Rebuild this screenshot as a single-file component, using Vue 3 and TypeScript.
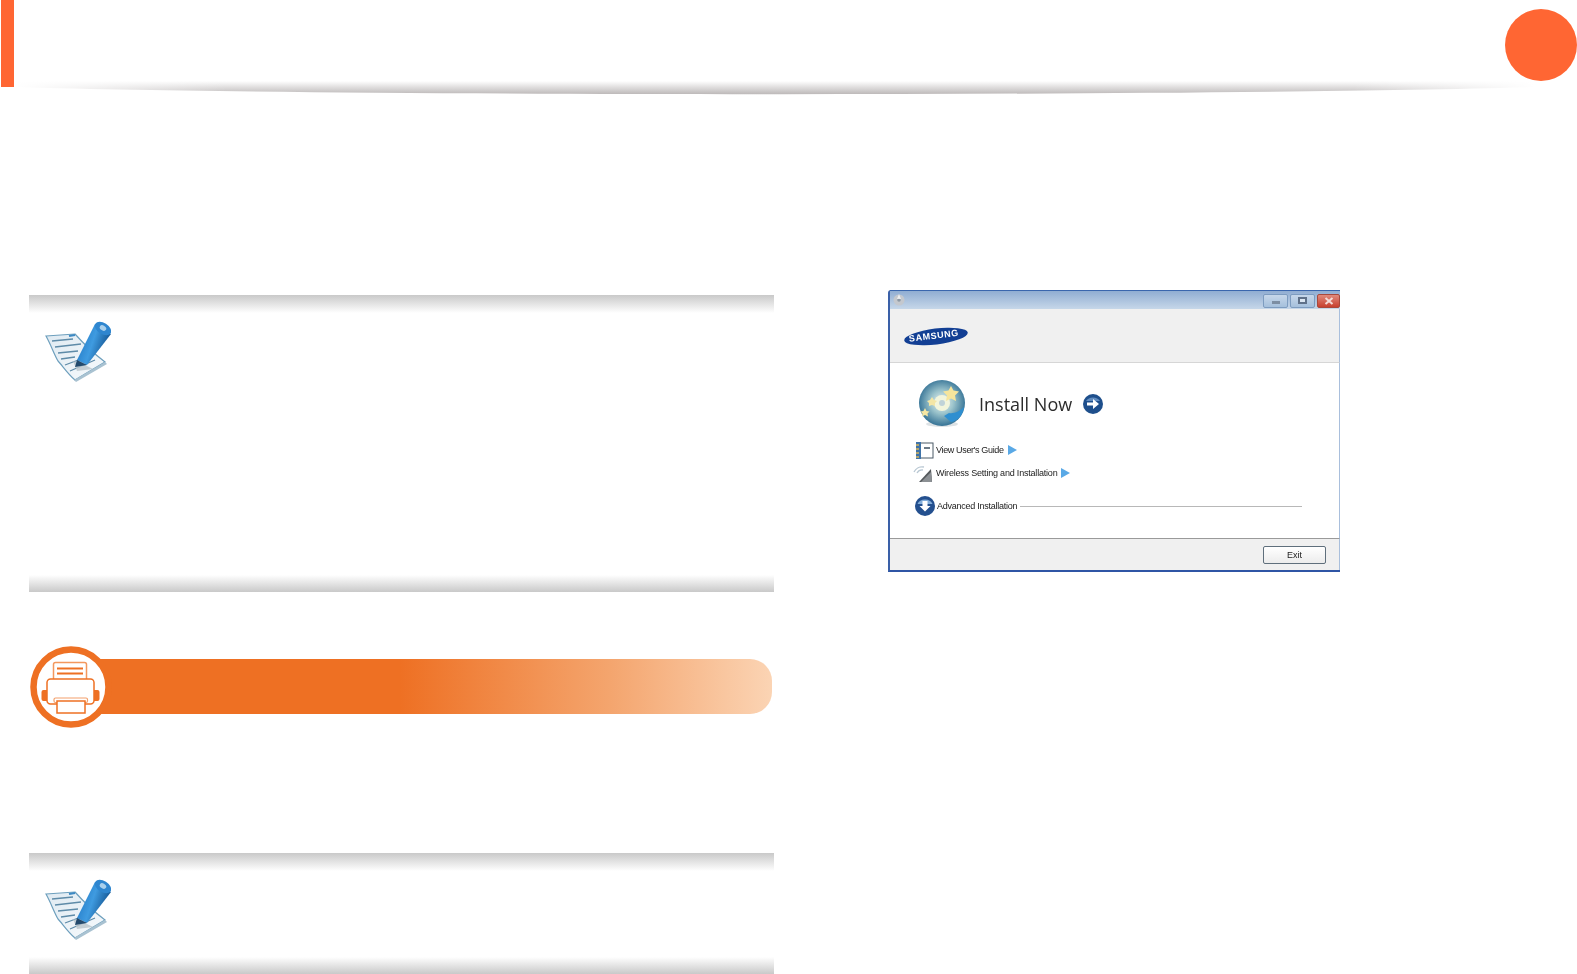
<script setup lang="ts">
const links = [
  { id: "guide", label: "View User's Guide" },
  { id: "wireless", label: "Wireless Setting and Installation" },
];
</script>

<template>
  <div class="page">
    <header class="top">
      <div class="tab"></div>
      <div class="dot"></div>
      <svg class="rule" width="1577" height="16" viewBox="0 0 1577 16">
        <defs>
          <linearGradient id="ruleV" x1="0" y1="0" x2="0" y2="1">
            <stop offset="0" stop-color="#fff" />
            <stop offset="0.5" stop-color="#dedcdc" />
            <stop offset="1" stop-color="#bdb9b9" />
          </linearGradient>
          <linearGradient id="ruleH" x1="0" y1="0" x2="1" y2="0">
            <stop offset="0" stop-color="#fff" stop-opacity="1" />
            <stop offset="0.14" stop-color="#fff" stop-opacity="0" />
            <stop offset="0.88" stop-color="#fff" stop-opacity="0" />
            <stop offset="1" stop-color="#fff" stop-opacity="1" />
          </linearGradient>
        </defs>
        <path d="M14 6 C 300 15 1200 16 1535 6 L 1535 0 L 14 0 Z" fill="url(#ruleV)" />
        <rect x="14" width="1521" height="16" fill="url(#ruleH)" />
      </svg>
    </header>

    <main class="main">
      <section class="left">
        <div class="note note-tall">
          <svg class="note-icon" viewBox="0 0 66 62" width="66" height="62">
            <defs>
              <linearGradient id="paper" x1="0" y1="0" x2="1" y2="1">
                <stop offset="0" stop-color="#dfeaf2" />
                <stop offset="1" stop-color="#f7fafc" />
              </linearGradient>
              <linearGradient id="pencil" x1="0" y1="0" x2="1" y2="0.4">
                <stop offset="0" stop-color="#1a6fbe" />
                <stop offset="0.55" stop-color="#3f9be0" />
                <stop offset="1" stop-color="#12528f" />
              </linearGradient>
            </defs>
            <path d="M1 15 L30 13 C 38 22 48 32 60 41 L30 59 C 22 52 17 44 13 40 C 9 33 6 24 1 15 Z" fill="url(#paper)" stroke="#6d9fbd" stroke-width="1.2" />
            <path d="M29 59 L60 41 L62 43 L31 61 Z" fill="#a9c2d1" />
            <path d="M7 20 L28 18 M10 26 L36 23 M13 32 L33 30 M16 38 L30 36 M20 44 L44 35 M25 50 L50 39" stroke="#5e8ba8" stroke-width="1.3" fill="none" />
            <path d="M24 15 L30 14" stroke="#3c89c4" stroke-width="2" />
            <path d="M28 40 L38 43 L48 48 L32 50 Z" fill="#b9c4cb" opacity="0.8" />
            <path d="M50 3 L66 13 L42 44 L32 39 Z" fill="url(#pencil)" />
            <path d="M32 39 L42 44 L30 46 Z" fill="#234a6d" />
            <ellipse cx="58" cy="7.5" rx="9" ry="5.5" transform="rotate(32 58 7.5)" fill="#2f86cf" />
            <ellipse cx="58" cy="7" rx="3.5" ry="2.5" transform="rotate(32 58 7)" fill="#a9d0ec" />
          </svg>
        </div>

        <div class="heading">
          <div class="pill"></div>
          <svg class="badge" viewBox="0 0 82 82" width="82" height="82">
            <circle cx="41" cy="41" r="37.5" fill="#fff" stroke="#ee7023" stroke-width="6.5" />
            <rect x="23.5" y="16.5" width="33" height="22" rx="2" fill="#fff" stroke="#f3985e" stroke-width="1.5" />
            <path d="M27 22.5 H53 M27 27.5 H53" stroke="#ee7023" stroke-width="2" />
            <path d="M17 44 H13.5 a2 2 0 0 0 -2 2 v7 a2 2 0 0 0 2 2 H17 Z M64 44 H67.5 a2 2 0 0 1 2 2 v7 a2 2 0 0 1 -2 2 H64 Z" fill="#ee7023" />
            <rect x="17" y="33" width="47" height="25" rx="3.5" fill="#fff" stroke="#ee7023" stroke-width="1.5" />
            <rect x="24" y="52" width="33.5" height="4.5" rx="1.5" fill="#fff" stroke="#f3a06c" stroke-width="1.2" />
            <rect x="27" y="55" width="28" height="12" fill="#fff" stroke="#ee7023" stroke-width="1.5" />
          </svg>
        </div>

        <div class="note note-short">
          <svg class="note-icon" viewBox="0 0 66 62" width="66" height="62">
            <path d="M1 15 L30 13 C 38 22 48 32 60 41 L30 59 C 22 52 17 44 13 40 C 9 33 6 24 1 15 Z" fill="url(#paper)" stroke="#6d9fbd" stroke-width="1.2" />
            <path d="M29 59 L60 41 L62 43 L31 61 Z" fill="#a9c2d1" />
            <path d="M7 20 L28 18 M10 26 L36 23 M13 32 L33 30 M16 38 L30 36 M20 44 L44 35 M25 50 L50 39" stroke="#5e8ba8" stroke-width="1.3" fill="none" />
            <path d="M24 15 L30 14" stroke="#3c89c4" stroke-width="2" />
            <path d="M28 40 L38 43 L48 48 L32 50 Z" fill="#b9c4cb" opacity="0.8" />
            <path d="M50 3 L66 13 L42 44 L32 39 Z" fill="url(#pencil)" />
            <path d="M32 39 L42 44 L30 46 Z" fill="#234a6d" />
            <ellipse cx="58" cy="7.5" rx="9" ry="5.5" transform="rotate(32 58 7.5)" fill="#2f86cf" />
            <ellipse cx="58" cy="7" rx="3.5" ry="2.5" transform="rotate(32 58 7)" fill="#a9d0ec" />
          </svg>
        </div>
      </section>

      <section class="right">
        <div class="window">
          <div class="titlebar">
            <svg class="app-icon" viewBox="0 0 14 14" width="14" height="14">
              <circle cx="7" cy="7" r="5.5" fill="#c4c8ce" />
              <circle cx="7" cy="7" r="1.8" fill="#8d99a6" />
              <path d="M7 1 L9 6 L5 6 Z" fill="#fff" opacity="0.7" />
            </svg>
            <div class="ctrls">
              <div class="ctrl ctrl-min"><span class="glyph-min"></span></div>
              <div class="ctrl ctrl-max"><span class="glyph-max"></span></div>
              <div class="ctrl ctrl-close">
                <svg viewBox="0 0 12 8" width="12" height="8"><path d="M2.5 1 L9.5 7 M9.5 1 L2.5 7" stroke="#f4dcd8" stroke-width="2" /></svg>
              </div>
            </div>
          </div>

          <div class="win-header">
            <svg class="logo" viewBox="0 0 64 21" width="64" height="21">
              <g transform="rotate(-7 32 10.5)">
                <ellipse cx="32" cy="10.5" rx="32" ry="8" fill="#123f94" />
                <text x="30" y="12.5" text-anchor="middle" class="logo-text">SAMSUNG</text>
              </g>
            </svg>
          </div>

          <div class="win-body">
            <div class="install">
              <svg viewBox="0 0 50 48" width="50" height="48">
                <defs>
                  <radialGradient id="disc" cx="0.5" cy="0.48" r="0.55">
                    <stop offset="0" stop-color="#eef3f2" />
                    <stop offset="0.45" stop-color="#9cc4cc" />
                    <stop offset="1" stop-color="#2a6a90" />
                  </radialGradient>
                </defs>
                <ellipse cx="25" cy="44" rx="16" ry="3" fill="#dde2e5" />
                <circle cx="25" cy="23" r="23" fill="url(#disc)" />
                <circle cx="25" cy="23" r="8" fill="#f2f5dc" />
                <circle cx="25" cy="23" r="3" fill="#c0d3d8" />
                <path d="M34 6 L36.5 10.5 L42 11.5 L38 15.5 L39 21 L34 18.5 L29 21 L30 15.5 L26 11.5 L31.5 10.5 Z" fill="#f6e59c" />
                <path d="M15 17 l2 3 l3 1 l-2 2 l0 3 l-3 -1 l-3 1 l0 -3 l-2 -2 l3 -1 Z" fill="#f3e6a6" />
                <path d="M8 28 l1.5 3 l3 .5 l-2 2 l.5 3 l-3 -1.5 l-3 1.5 l.5 -3 l-2 -2 l3 -.5 Z" fill="#f6e7a2" />
                <path d="M47 27 C 46 35 41 41 34 42 L27 36 L32 33 C 37 34 43 31 47 27 Z" fill="#2f8fd0" />
              </svg>
              <span class="install-text">Install Now</span>
              <svg viewBox="0 0 20 20" width="20" height="20">
                <circle cx="10" cy="10" r="10" fill="#1e4f8c" />
                <path d="M3 7 A 8 7 0 0 1 17 7 Z" fill="#7ea7d4" opacity="0.7" />
                <path d="M4 8.5 H10 V5 L16 10 L10 15 V11.5 H4 Z" fill="#fff" />
              </svg>
            </div>

            <div class="link-row link-guide">
              <svg class="link-icon" viewBox="0 0 22 18" width="22" height="18">
                <rect x="5" y="2" width="16" height="15" fill="#fff" stroke="#4b5a67" stroke-width="1" />
                <rect x="4" y="1" width="5" height="17" fill="#3f73a8" />
                <path d="M4 4 H7 M4 8 H7 M4 12 H7 M4 16 H7" stroke="#d9b75c" stroke-width="1.5" />
                <rect x="12" y="6" width="6" height="2" fill="#6c7a86" />
              </svg>
              <span class="link-text">{{ links[0].label }}</span>
              <span class="play"></span>
            </div>
            <div class="link-row link-wireless">
              <svg class="link-icon" viewBox="0 0 22 18" width="22" height="18">
                <path d="M2 8 A 9 9 0 0 1 12 3 M5 9 A 6 6 0 0 1 11 6" stroke="#b9c8d3" stroke-width="1.3" fill="none" />
                <path d="M7 18 L20 18 L19 5 Z" fill="#55595c" />
                <path d="M9 18 L19 8 L20 18 Z" fill="#8c9094" />
              </svg>
              <span class="link-text">{{ links[1].label }}</span>
              <span class="play"></span>
            </div>
            <div class="adv-row">
              <svg class="adv-icon" viewBox="0 0 20 20" width="20" height="20">
                <circle cx="10" cy="10" r="10" fill="#24508f" />
                <path d="M2.5 8 A 8 7 0 0 1 17.5 8 Z" fill="#84aeda" />
                <path d="M7.5 5 H12.5 V10 H15.5 L10 15.5 L4.5 10 H7.5 Z" fill="#fff" />
              </svg>
              <span class="adv-text">Advanced Installation</span>
              <div class="adv-line"></div>
            </div>
          </div>

          <div class="win-footer">
            <div class="exit-btn">Exit</div>
          </div>
        </div>
      </section>
    </main>
  </div>
</template>

<style>
html,
body {
  margin: 0;
  background: #fff;
  overflow: hidden;
}
</style>

<style scoped>
.page {
  width: 1577px;
  height: 974px;
  overflow: hidden;
  background: #fff;
  font-family: "Liberation Sans", Arial, sans-serif;
}

.top {
  position: relative;
  height: 87px;
}

.tab {
  width: 13px;
  height: 87px;
  margin-left: 1px;
  background: #ff6633;
}

.dot {
  position: absolute;
  top: 9px;
  left: 1505px;
  width: 72px;
  height: 72px;
  border-radius: 50%;
  background: #ff6633;
}

.rule {
  position: absolute;
  left: 0;
  top: 81px;
}

.main {
  display: grid;
  grid-template-columns: 745px 452px;
  column-gap: 114px;
  padding: 203px 0 0 29px;
}

.left {
  padding-top: 5px;
}

.note {
  position: relative;
  box-sizing: border-box;
  background:
    linear-gradient(#c9c9c9, #fff) top / 100% 18px no-repeat,
    linear-gradient(#fff, #c9c9c9) bottom / 100% 17px no-repeat;
}

.note-tall {
  height: 297px;
}

.note-short {
  height: 121px;
  margin-top: 139px;
}

.note-icon {
  display: block;
  position: absolute;
  left: 16px;
  top: 26px;
  filter: blur(0.6px);
}

.heading {
  position: relative;
  height: 55px;
  margin-top: 67px;
}

.pill {
  height: 55px;
  margin: 0 2px 0 40px;
  border-radius: 0 22px 22px 0;
  background: linear-gradient(90deg, #ee7023 0%, #ee7023 47%, #f4a56e 77%, #fbd4b4 100%);
}

.badge {
  position: absolute;
  left: 1px;
  top: -13.5px;
}

.window {
  box-sizing: border-box;
  width: 452px;
  height: 282px;
  display: flex;
  flex-direction: column;
  background: #fff;
  border-left: 2px solid #3a60a8;
  border-bottom: 2px solid #2f55a5;
  border-radius: 3px 0 0 0;
  filter: blur(0.45px);
}

.titlebar {
  height: 19px;
  box-sizing: border-box;
  display: flex;
  align-items: flex-start;
  justify-content: space-between;
  border-top: 1.5px solid #3a66ad;
  background: linear-gradient(#90add2, #c6d7e9);
  padding-left: 2px;
}

.app-icon {
  margin-top: 2px;
}

.ctrls {
  display: flex;
  gap: 2px;
  margin-top: 2.5px;
}

.ctrl {
  height: 14px;
  display: flex;
  align-items: center;
  justify-content: center;
  box-sizing: border-box;
  border: 1px solid #7d9cc0;
  border-radius: 2px;
  background: linear-gradient(#c6d7ea, #a5c0dc);
}

.ctrl-min {
  width: 25px;
}

.ctrl-max {
  width: 25px;
}

.ctrl-close {
  width: 23px;
  border-color: #a8493c;
  background: linear-gradient(#e08a7c, #c8402f);
}

.glyph-min {
  width: 8px;
  height: 3px;
  margin-top: 4px;
  background: #7c8ea3;
}

.glyph-max {
  box-sizing: border-box;
  width: 9px;
  height: 7px;
  border: 2px solid #5f7189;
  background: #dbe6f1;
}

.win-header {
  height: 54px;
  box-sizing: border-box;
  padding: 17px 0 0 14px;
  background: #f0f0f0;
  border-bottom: 1px solid #d6d6d6;
  border-right: 1px solid #a9bfdc;
}

.logo {
  display: block;
}

.logo-text {
  fill: #fff;
  font-family: "Liberation Sans", Arial, sans-serif;
  font-weight: 700;
  font-size: 9px;
  letter-spacing: 0.6px;
}

.win-body {
  flex: 1;
  padding: 17px 37px 0 22px;
  border-right: 1px solid #a9bfdc;
}

.install {
  display: flex;
  align-items: center;
  padding-left: 5px;
  height: 48px;
}

.install-text {
  margin: 0 11px 0 12px;
  font-family: "Open Sans", sans-serif;
  font-size: 18px;
  color: #2c2c2c;
}

.link-row {
  display: flex;
  align-items: center;
  height: 18px;
}

.link-guide {
  margin-top: 13px;
}

.link-guide .link-text {
  letter-spacing: -0.35px;
}

.link-wireless {
  margin-top: 5px;
}

.link-icon {
  flex: none;
}

.link-text {
  margin-left: 2px;
  font-size: 9px;
  letter-spacing: -0.2px;
  color: #222;
  white-space: nowrap;
}

.play {
  width: 0;
  height: 0;
  margin-left: 4px;
  border-left: 9px solid #5aa9e6;
  border-top: 5.5px solid transparent;
  border-bottom: 5.5px solid transparent;
}

.adv-row {
  display: flex;
  align-items: center;
  height: 20px;
  margin-top: 14px;
  padding-left: 3px;
}

.adv-text {
  margin-left: 2px;
  font-size: 9px;
  letter-spacing: -0.25px;
  color: #222;
  white-space: nowrap;
}

.adv-line {
  flex: 1;
  height: 1px;
  margin-left: 3px;
  background: #b8b8b8;
}

.win-footer {
  height: 32px;
  box-sizing: border-box;
  display: flex;
  justify-content: flex-end;
  align-items: flex-start;
  padding: 7px 13px 0 0;
  background: #f0f0f0;
  border-top: 1px solid #9a9a9a;
  border-right: 1px solid #a9bfdc;
}

.exit-btn {
  box-sizing: border-box;
  width: 63px;
  height: 18px;
  display: flex;
  align-items: center;
  justify-content: center;
  border: 1px solid #5f6f7c;
  border-radius: 2px;
  background: linear-gradient(#fff, #ececec);
  font-size: 9px;
  color: #222;
}
</style>
